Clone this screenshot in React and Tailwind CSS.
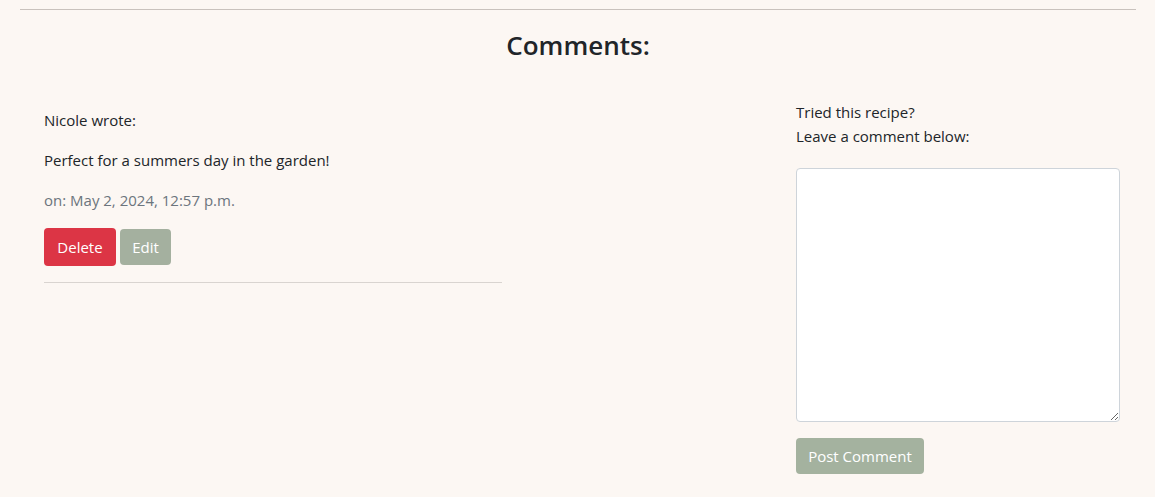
export default function App() {
    return (
        <div
            className="min-h-[497px] bg-[#fcf7f3] pl-5 pr-[19px] text-[#212529]"
            style={{ fontFamily: '"Open Sans", "Noto Sans", sans-serif' }}
        >
            <hr className="m-0 border-t border-[#c9c2bd] pt-0 relative top-[9px]" />

            <h3 className="pt-[27px] text-center text-[26px] font-semibold leading-[34px]">
                Comments:
            </h3>

            <div className="mt-[38px] flex">
                {/* comments list */}
                <div className="w-[458px] ml-6 pt-[8px]">
                    <p className="text-[15px] leading-6">Nicole wrote:</p>
                    <p className="mt-4 text-[15px] leading-6">
                        Perfect for a summers day in the garden!
                    </p>
                    <p className="mt-4 text-[15px] leading-6 text-[#6c757d]">
                        on: May 2, 2024, 12:57 p.m.
                    </p>

                    <div className="mt-[16px] flex items-center gap-1">
                        <button className="h-[38px] w-[72px] rounded-[4px] bg-[#dc3545] text-[15px] text-white">
                            Delete
                        </button>
                        <button className="h-[36px] w-[51px] rounded-[4px] bg-[#a4b09f] text-[15px] text-white">
                            Edit
                        </button>
                    </div>

                    <hr className="mt-4 border-t border-[#d9d4d0]" />
                </div>

                {/* comment form */}
                <div className="ml-[294px] w-[324px]">
                    <p className="text-[15px] leading-6">Tried this recipe?</p>
                    <p className="text-[15px] leading-6">Leave a comment below:</p>

                    <textarea className="mt-[20px] block h-[254px] w-full rounded-[4px] border border-[#ced4da] bg-white" />

                    <button className="mt-4 h-[36px] w-[128px] rounded-[4px] bg-[#a4b29f] text-[15px] text-white">
                        Post Comment
                    </button>
                </div>
            </div>
        </div>
    );
}
